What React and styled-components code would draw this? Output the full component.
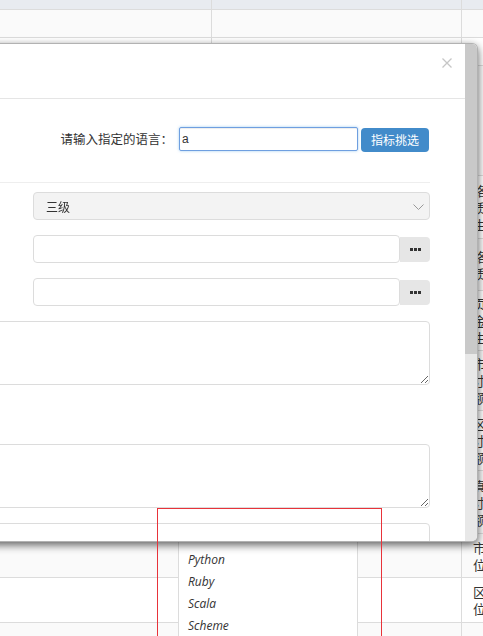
import React from 'react';
import styled, { createGlobalStyle } from 'styled-components';

const GlobalStyle = createGlobalStyle`
  html, body {
    margin:0;
    padding:0;
    background:#fff;
  }
  body {
    font-family:"Noto Sans CJK SC", "Noto Sans", sans-serif;
    font-size:12px;
    color:#333;
  }
  *, *::before, *::after {
    box-sizing:border-box;
  }
`;

const Page = styled.div`
    position:relative;
    width:483px;
    height:636px;
    overflow:hidden;
    background:#fff;
`;

/* table behind the dialog */
const Table = styled.div`
    width:560px;
`;

const Row = styled.div`
    display:grid;
    grid-template-columns:212px 250px 98px;
    height:${p => p.$h}px;
    background:${p => (p.$head ? '#e8ebf0' : p.$stripe ? '#fafafa' : '#fff')};
    border-bottom:1px solid #dcdcdc;
`;

const Cell = styled.div`
    border-right:1px solid #dcdcdc;
`;

const NameCell = styled.div`
    display:flex;
    align-items:center;
    padding-left:11px;
    font-size:13px;
    line-height:17px;
    color:#333;
`;

const Stack = styled.div`
    width:14px;
    word-break:break-all;
`;

/* autocomplete list, sits under the dialog */
const Suggest = styled.ul`
    position:absolute;
    left:178px;
    top:151px;
    width:180px;
    margin:0;
    padding:1px 0 0;
    list-style:none;
    background:#fff;
    border:1px solid #dcdcdc;
    z-index:1;
`;

const SuggestItem = styled.li`
    height:22px;
    line-height:22px;
    padding-left:9px;
    font-family:"Open Sans", "Noto Sans", sans-serif;
    font-style:italic;
    font-size:12px;
    color:#333;
`;

/* dialog */
const Modal = styled.div`
    position:absolute;
    top:43px;
    left:-200px;
    width:678px;
    height:499px;
    display:flex;
    background:#fff;
    border:1px solid rgba(0,0,0,0.3);
    border-radius:6px;
    box-shadow:0 3px 9px rgba(0,0,0,0.62);
    overflow:hidden;
    z-index:2;
`;

const Content = styled.div`
    flex:1;
    min-width:0;
    overflow:hidden;
`;

const ScrollTrack = styled.div`
    flex:0 0 12px;
    background:#e8e8e8;
`;

const ScrollThumb = styled.div`
    height:310px;
    background:#c9c9c9;
`;

const Header = styled.div`
    display:flex;
    justify-content:flex-end;
    align-items:flex-start;
    height:55px;
    padding:14px 13px 0 15px;
    border-bottom:1px solid #e5e5e5;
`;

const Close = styled.button`
    display:flex;
    padding:0;
    border:0;
    background:none;
    color:#c6c6c6;
    cursor:pointer;
`;

const Body = styled.div`
    padding:27px 35px 0 15px;
`;

const LangRow = styled.div`
    display:flex;
    justify-content:flex-end;
    align-items:center;
    height:25px;
    padding-right:1px;
`;

const Label = styled.label`
    font-size:12.5px;
    color:#333;
    margin-right:6px;
`;

const LangInput = styled.input`
    width:179px;
    height:24px;
    padding:0 2px;
    font-family:"Liberation Sans", Arial, sans-serif;
    font-size:12px;
    color:#333;
    border:1px solid #6f9fe0;
    border-radius:2px;
    outline:none;
    box-shadow:inset 0 1px 1px rgba(0,0,0,.075), 0 0 3px rgba(102,175,233,.6);
`;

const PrimaryButton = styled.button`
    width:68px;
    height:24px;
    margin-left:3px;
    margin-top:2px;
    padding:0;
    border:0;
    border-radius:4px;
    background:#428bca;
    color:#fff;
    font-family:"Noto Sans CJK SC", sans-serif;
    font-size:12px;
    cursor:pointer;
`;

const Divider = styled.hr`
    margin:31px 0 9px;
    border:0;
    border-top:1px solid #eee;
`;

const Fields = styled.div`
    display:flex;
    flex-direction:column;
    gap:15px;
`;

const Field = styled.div`
    display:flex;
    align-items:center;
    padding-left:${p => (p.$wide ? 0 : 217)}px;
    margin-top:${p => p.$push || 0}px;
`;

const SelectWrap = styled.div`
    position:relative;
    flex:1;
`;

const Select = styled.select`
    width:100%;
    height:28px;
    padding:0 12px;
    appearance:none;
    background:#f3f3f3;
    border:1px solid #dcdcdc;
    border-radius:4px;
    font-family:"Noto Sans CJK SC", sans-serif;
    font-size:12px;
    color:#333;
    outline:none;
`;

const Chevron = styled.svg`
    position:absolute;
    right:6px;
    top:12px;
    pointer-events:none;
`;

const TextInput = styled.input`
    flex:1;
    height:28px;
    padding:0 8px;
    border:1px solid #dcdcdc;
    border-radius:4px;
    font-size:12px;
    outline:none;
`;

const AddonButton = styled.button`
    display:flex;
    align-items:center;
    justify-content:center;
    width:30px;
    height:25px;
    padding:0;
    border:0;
    border-radius:0 4px 4px 0;
    background:#e6e6e6;
    color:#333;
    cursor:pointer;
`;

const TextArea = styled.textarea`
    flex:1;
    height:64px;
    padding:6px 8px;
    border:1px solid #dcdcdc;
    border-radius:4px;
    font-size:12px;
    outline:none;
`;

const Highlight = styled.div`
    position:absolute;
    left:157px;
    top:508px;
    width:225px;
    height:140px;
    border:1px solid #e8333a;
    pointer-events:none;
    z-index:3;
`;

const rows = [
  { h: 10, head: true },
  { h: 28, stripe: true },
  { h: 28 },
  { h: 110, stripe: true },
  { h: 63, name: '络质生' },
  { h: 52, stripe: true, name: '络质' },
  { h: 60, name: '页金生' },
  { h: 60, stripe: true, name: '市寸额' },
  { h: 60, name: '区寸额' },
  { h: 63, stripe: true, name: '真寸额' },
  { h: 44, stripe: true, name: '市位' },
  { h: 45, name: '区位' },
  { h: 60, stripe: true, name: '请' },
];

const languages = [
  'ActionScript', 'AppleScript', 'Asp', 'BASIC', 'C', 'C++', 'Clojure', 'COBOL',
  'ColdFusion', 'Erlang', 'Fortran', 'Groovy', 'Haskell', 'Java', 'JavaScript',
  'Lisp', 'Perl', 'PHP', 'Python', 'Ruby', 'Scala', 'Scheme',
];

const Dots = () => (
  <svg width="11" height="3" viewBox="0 0 11 3">
    <rect x="0" y="0" width="3" height="3" fill="currentColor" />
    <rect x="4" y="0" width="3" height="3" fill="currentColor" />
    <rect x="8" y="0" width="3" height="3" fill="currentColor" />
  </svg>
);

const App = () => {
  return (
    <>
      <GlobalStyle />
      <Page>
        <Table>
          {rows.map((r, i) => (
            <Row key={i} $h={r.h} $head={r.head} $stripe={r.stripe}>
              <Cell />
              <Cell />
              <NameCell>
                <Stack>{r.name}</Stack>
              </NameCell>
            </Row>
          ))}
        </Table>

        <Suggest>
          {languages.map(l => (
            <SuggestItem key={l}>{l}</SuggestItem>
          ))}
        </Suggest>

        <Modal>
          <Content>
            <Header>
              <Close aria-label="close">
                <svg width="10" height="10" viewBox="0 0 10 10">
                  <path d="M0.5 0.5 L9.5 9.5 M9.5 0.5 L0.5 9.5" stroke="currentColor" strokeWidth="1.3" />
                </svg>
              </Close>
            </Header>
            <Body>
              <LangRow>
                <Label>请输入指定的语言：</Label>
                <LangInput defaultValue="a" autoFocus />
                <PrimaryButton>指标挑选</PrimaryButton>
              </LangRow>

              <Divider />

              <Fields>
                <Field>
                  <SelectWrap>
                    <Select defaultValue="3">
                      <option value="3">三级</option>
                    </Select>
                    <Chevron width="11" height="6" viewBox="0 0 11 6">
                      <path d="M0.5 0.5 L5.5 5.5 L10.5 0.5" fill="none" stroke="#999" strokeWidth="1" />
                    </Chevron>
                  </SelectWrap>
                </Field>
                <Field>
                  <TextInput />
                  <AddonButton><Dots /></AddonButton>
                </Field>
                <Field>
                  <TextInput />
                  <AddonButton><Dots /></AddonButton>
                </Field>
                <Field $wide>
                  <TextArea />
                </Field>
                <Field $wide $push={44}>
                  <TextArea />
                </Field>
                <Field $wide>
                  <TextArea />
                </Field>
              </Fields>
            </Body>
          </Content>
          <ScrollTrack>
            <ScrollThumb />
          </ScrollTrack>
        </Modal>

        <Highlight />
      </Page>
    </>
  );
};

export default App;
